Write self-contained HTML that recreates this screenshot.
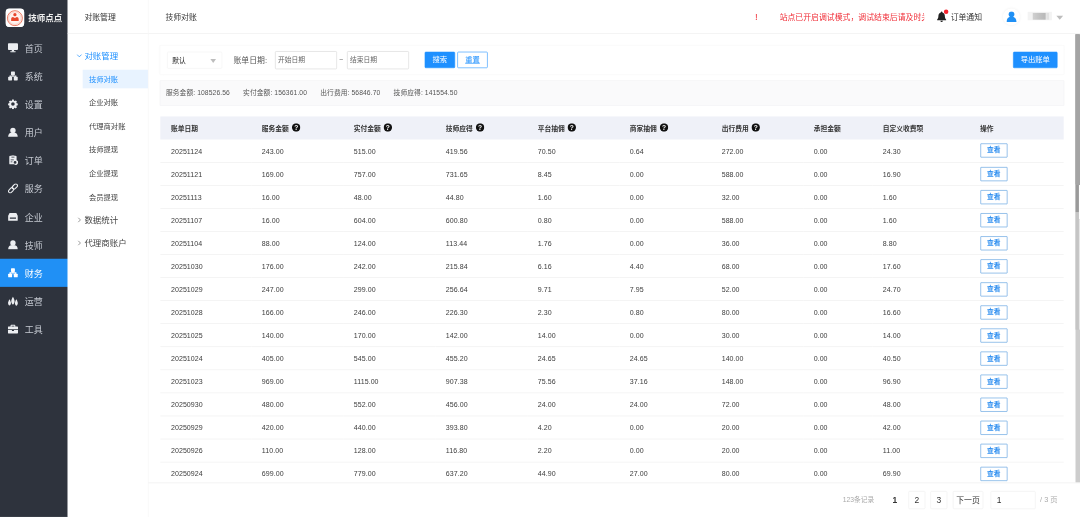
<!DOCTYPE html>
<html lang="zh-CN"><head><meta charset="utf-8"><title>技师对账</title>
<style>
*{box-sizing:border-box;margin:0;padding:0}
html,body{width:1080px;height:517px;overflow:hidden;background:#fff}
body{font-family:"Liberation Sans","Noto Sans CJK SC",sans-serif;color:#333}
#root{position:absolute;left:0;top:0;width:1920px;height:919px;transform:scale(0.5625);transform-origin:0 0;overflow:hidden;background:#fff;font-size:12px}
.side{position:absolute;left:0;top:0;width:120.500px;height:919px;background:#2e333d;color:#c5c9d1}
.logo{position:absolute;left:10px;top:14.500px;width:33px;height:33.500px;border-radius:7px;background:#fff;overflow:hidden}
.logo svg{width:34px;height:34px;display:block}
.brand{position:absolute;left:50px;top:0;height:60px;line-height:66px;font-size:15px;font-weight:700;color:#eee;letter-spacing:.2px;white-space:nowrap}
.menu{position:absolute;left:0;top:60px;width:120.500px}
.si{height:50px;position:relative}
.si.on{background:#2090f5;color:#fff}
.si.on .ic{color:#fff}
.si .ic{position:absolute;left:14px;top:16px;width:18px;height:18px;color:#eceef1}
.si .ic svg{width:18px;height:18px;display:block}
.si .tx{position:absolute;left:44px;top:2px;line-height:50px;font-size:16px;white-space:nowrap}
.sub{position:absolute;left:120px;top:0;width:144px;height:919px;border-right:1px solid #ececec;background:#fff}
.sub .ttl{height:60px;line-height:62px;padding-left:30px;font-size:14px;color:#333;border-bottom:1px solid #ececec}
.grp{position:absolute;left:0;width:143px;height:36px;line-height:36px;font-size:15px;color:#444}
.grp .tx{position:absolute;left:30px;white-space:nowrap}
.grp svg{position:absolute;left:16px;top:13px;width:10px;height:10px}
.grp.open{color:#1e90ff}
.it{position:absolute;left:27px;width:116px;height:33px;line-height:34px;font-size:13px;color:#444;padding-left:11px;white-space:nowrap}
.it.on{background:#e8f3ff;color:#1e90ff}
.hdr{position:absolute;left:264px;top:0;width:1656px;height:60px;border-bottom:1px solid #ececec;background:#fff}
.hdr .crumb{position:absolute;left:30px;top:0;line-height:62px;font-size:14px;color:#333}
.main{position:absolute;left:264px;top:61px;width:1648px;height:797px;overflow:hidden;background:#fff}
.filter{position:absolute;left:20px;top:19px;width:1608px;height:53px;background:#fff;border:1px solid #f8f8f8;box-shadow:0 1px 5px rgba(0,0,0,.045)}
.sel{position:absolute;left:12px;top:11px;width:98px;height:30px;border:1px solid #f0f0f0;border-radius:2px;font-size:12px;line-height:30px;padding-left:8px;color:#222}
.sel:after{content:"";position:absolute;right:10px;top:12px;border:5px solid transparent;border-top:7px solid #bdbdbd;border-bottom:0}
.lbl{position:absolute;left:130px;top:10.500px;line-height:30px;font-size:14px;color:#555;white-space:nowrap}
.inp{position:absolute;top:10px;height:32px;width:110px;border:1px solid #d4d4d4;border-radius:2px;font-size:12px;line-height:28px;padding-left:4px;color:#666;white-space:nowrap}
.dash{position:absolute;left:318px;top:10px;line-height:30px;font-size:12px;color:#666}
.btn{position:absolute;top:10.500px;height:29.500px;width:54px;border-radius:2px;font-size:13px;line-height:28px;text-align:center;border:1px solid #1e90ff;white-space:nowrap}
.btn.p{background:#1e90ff;color:#fff}
.btn.o{background:#fff;color:#1e90ff}
.sum{position:absolute;left:20px;top:82px;width:1608px;height:44.500px;background:#fafafb;border:1px solid #f3f3f4;line-height:43px;padding-left:10px;font-size:12px;color:#555;white-space:nowrap;letter-spacing:.15px}
.sum span{margin-right:23.500px}
table{position:absolute;left:21px;top:145.500px;width:1606px;border-collapse:collapse;table-layout:fixed;font-size:12.500px}
th{height:41px;background:transparent;text-align:left;padding:0 0 0 19px;font-size:12px;font-weight:700;color:#333;white-space:nowrap}
th span{vertical-align:middle;position:relative;top:-1px}
th .q{width:15px;height:15px;margin-left:5px;vertical-align:middle;position:relative;top:-1px}
td{height:41px;border-bottom:1px solid #ececec;padding:2px 0 0 19px;letter-spacing:.1px;color:#3c3c3c;white-space:nowrap}
.vb{display:inline-block;margin-left:1px;position:relative;top:-1px;width:47.500px;height:25px;line-height:23px;border:1px solid #4a94dc;color:#2f8ff0;font-size:12px;font-weight:700;text-align:center;border-radius:1px;vertical-align:middle;background:#fff}
.foot{position:absolute;left:264px;top:858px;width:1656px;height:61px;border-top:1px solid #e9e9e9;background:#fff}
.foot div{position:absolute;white-space:nowrap}
.pg{top:14px;height:32px;line-height:30px;width:30px;text-align:center;font-size:15px;color:#333;border:1px solid #eee;border-radius:2px}
.sb{position:absolute;left:1911.500px;top:60.500px;width:9px;height:797.500px;background:#cdcdcd}
</style></head><body>
<div id="root">
<div class="side">
<div class="logo"><svg viewBox="0 0 34 34"><rect width="34" height="34" fill="#fff"/><circle cx="16.500" cy="17.300" r="13.300" fill="#fff" stroke="#ea6044" stroke-width="1.500"/><circle cx="16.500" cy="17.300" r="11.200" fill="#fff3ef" stroke="#f4b3a3" stroke-width="1"/><circle cx="16.500" cy="11.200" r="2.900" fill="#e8472d"/><path d="M9.800 22.500v-3.500c0-2.300 1.500-3.800 3.300-3.800l3.400 2 3.400-2c1.800 0 3.300 1.500 3.300 3.800v3.500z" fill="#e8472d"/></svg></div>
<div class="brand">技师点点</div>
<div class="menu">
<div class="si"><span class="ic"><svg viewBox="0 0 18 18"><rect x="0" y="1" width="18" height="12" rx="1.800" fill="currentColor"/><rect x="7" y="12.500" width="4" height="3" fill="currentColor"/><rect x="4" y="15" width="10" height="2" rx=".8" fill="currentColor"/></svg></span><span class="tx">首页</span></div>
<div class="si"><span class="ic"><svg viewBox="0 0 18 18"><rect x="5.500" y="1" width="7" height="6.500" rx="1.200" fill="currentColor"/><rect x="0.500" y="10.500" width="7" height="6.500" rx="1.200" fill="currentColor"/><rect x="10.500" y="10.500" width="7" height="6.500" rx="1.200" fill="currentColor"/><path d="M9 7v3M4 11.500V9.200h10v2.300" stroke="currentColor" stroke-width="2.200" fill="none"/></svg></span><span class="tx">系统</span></div>
<div class="si"><span class="ic"><svg viewBox="-1 -1 18 18"><path fill="currentColor" fill-rule="evenodd" d="M6.500 0h3l.4 2 1.400.6 1.700-1.100 2.100 2.100-1.100 1.700.6 1.400 2 .4v3l-2 .4-.6 1.400 1.100 1.700-2.100 2.100-1.700-1.100-1.400.6-.4 2h-3l-.4-2-1.400-.6-1.700 1.100-2.100-2.100 1.100-1.700-.6-1.400-2-.4v-3l2-.4.6-1.400-1.100-1.700 2.100-2.100 1.700 1.100 1.400-.6zM8 4.800a3.200 3.200 0 100 6.400 3.200 3.200 0 000-6.400z"/></svg></span><span class="tx">设置</span></div>
<div class="si"><span class="ic"><svg viewBox="0 0 18 18"><circle cx="9" cy="5.800" r="4.800" fill="currentColor"/><path d="M0.500 17c0-4.800 2.500-7.500 8.500-7.500s8.500 2.700 8.500 7.500z" fill="currentColor"/></svg></span><span class="tx">用户</span></div>
<div class="si"><span class="ic"><svg viewBox="0 0 18 18"><path fill="currentColor" fill-rule="evenodd" d="M2.500 2.500a1.500 1.500 0 011.500-1.500h2l.8-1h4.400l.8 1h2a1.500 1.500 0 011.500 1.500v6.300a4.300 4.300 0 11-4.500 7.200H4a1.500 1.500 0 01-1.500-1.500zM6.300 2.600v1.600h5.400V2.600zM5 7.500v1.600h5.500V7.500zM5 11v1.600h3V11zM12.800 10.300a2.500 2.500 0 100 5 2.500 2.500 0 000-5z"/></svg></span><span class="tx">订单</span></div>
<div class="si"><span class="ic"><svg viewBox="0 0 18 18"><g transform="rotate(-45 9 9)" fill="none" stroke="currentColor" stroke-width="1.900"><rect x="-1" y="6" width="10.500" height="6" rx="3"/><rect x="8.500" y="6" width="10.500" height="6" rx="3"/></g></svg></span><span class="tx">服务</span></div>
<div class="si"><span class="ic"><svg viewBox="0 0 18 18"><path fill="currentColor" fill-rule="evenodd" d="M3 2.500h12l2.500 5v8a1 1 0 01-1 1h-15a1 1 0 01-1-1v-8zM3.500 10.500v2.300h11v-2.300z"/></svg></span><span class="tx">企业</span></div>
<div class="si"><span class="ic"><svg viewBox="0 0 18 18"><circle cx="9" cy="5.800" r="4.800" fill="currentColor"/><path d="M0.500 17c0-4.800 2.500-7.500 8.500-7.500s8.500 2.700 8.500 7.500z" fill="currentColor"/></svg></span><span class="tx">技师</span></div>
<div class="si on"><span class="ic"><svg viewBox="0 0 18 18"><rect x="5.500" y="1" width="7" height="6.500" rx="1.200" fill="currentColor"/><rect x="0.500" y="10.500" width="7" height="6.500" rx="1.200" fill="currentColor"/><rect x="10.500" y="10.500" width="7" height="6.500" rx="1.200" fill="currentColor"/><path d="M9 7v3M4 11.500V9.200h10v2.300" stroke="currentColor" stroke-width="2.200" fill="none"/></svg></span><span class="tx">财务</span></div>
<div class="si"><span class="ic"><svg viewBox="0 0 18 18"><path fill="currentColor" d="M2.9 6C4.46 8.5 5.5 11.5 5.5 12.5C5.5 14.5 4.2 17 2.9 17C1.5999999999999999 17 0.2999999999999998 14.5 0.2999999999999998 12.5C0.2999999999999998 11.5 1.3399999999999999 8.5 2.9 6zM9 1.5C10.8 4.0 12 8.5 12 9.5C12 11.5 10.5 15.5 9 15.5C7.5 15.5 6 11.5 6 9.5C6 8.5 7.2 4.0 9 1.5zM15.1 6C16.66 8.5 17.7 11.75 17.7 12.75C17.7 14.75 16.4 17.5 15.1 17.5C13.799999999999999 17.5 12.5 14.75 12.5 12.75C12.5 11.75 13.54 8.5 15.1 6z"/></svg></span><span class="tx">运营</span></div>
<div class="si"><span class="ic"><svg viewBox="0 0 18 18"><path fill="currentColor" fill-rule="evenodd" d="M6 1.500h6a1.200 1.200 0 011.200 1.200V4.500h3.600a1.200 1.200 0 011.200 1.200v3.600H0V5.700a1.200 1.200 0 011.200-1.200h3.600V2.700A1.200 1.200 0 016 1.500zM6.500 3.200v1.300h5V3.200zM0 10.500h7.200v1.800h3.600v-1.800H18v5a1.200 1.200 0 01-1.200 1.200H1.200A1.200 1.200 0 010 15.500z"/></svg></span><span class="tx">工具</span></div>
</div>
</div>
<div class="sub">
<div class="ttl">对账管理</div>
<div class="grp open" style="top:81px"><svg viewBox="0 0 10 10"><path d="M1 3l4 4 4-4" fill="none" stroke="#1e90ff" stroke-width="1.300"/></svg><span class="tx">对账管理</span></div>
<div class="it on" style="top:124px">技师对账</div>
<div class="it" style="top:166px">企业对账</div>
<div class="it" style="top:208px">代理商对账</div>
<div class="it" style="top:250px">技师提现</div>
<div class="it" style="top:292px">企业提现</div>
<div class="it" style="top:334px">会员提现</div>
<div class="grp" style="top:373px"><svg viewBox="0 0 10 10"><path d="M3 1l4 4-4 4" fill="none" stroke="#777" stroke-width="1.300"/></svg><span class="tx">数据统计</span></div>
<div class="grp" style="top:414px"><svg viewBox="0 0 10 10"><path d="M3 1l4 4-4 4" fill="none" stroke="#777" stroke-width="1.300"/></svg><span class="tx">代理商账户</span></div>
</div>
<div class="hdr">
<div class="crumb">技师对账</div>
<div style="position:absolute;left:1078px;top:0;line-height:60px;font-size:17px;color:#f02b35">!</div>
<div style="position:absolute;left:1122px;top:0;width:257px;overflow:hidden;line-height:60px;font-size:14px;color:#f02b35;white-space:nowrap">站点已开启调试模式，调试结束后请及时关闭</div>
<svg style="position:absolute;left:1400px;top:19px;width:20px;height:22px" viewBox="0 0 20 22"><path fill="#222" d="M10 1.500a1.400 1.400 0 011.400 1.400v.5c2.700.7 4.300 3 4.300 5.800 0 4.200 1.200 5.600 2.300 6.600v1H2v-1c1.100-1 2.300-2.400 2.300-6.600 0-2.800 1.600-5.100 4.300-5.800v-.5A1.400 1.400 0 0110 1.500zM7.800 18h4.400a2.200 2.200 0 01-4.400 0z"/></svg>
<div style="position:absolute;left:1414px;top:17px;width:8px;height:8px;border-radius:50%;background:#f5222d"></div>
<div style="position:absolute;left:1426px;top:0;line-height:60px;font-size:14px;color:#333;white-space:nowrap">订单通知</div>
<div style="position:absolute;left:1519px;top:15px;width:30px;height:30px;border-radius:50%;background:#fff;box-shadow:0 0 5px rgba(0,0,0,.07)"></div>
<svg style="position:absolute;left:1525px;top:20px;width:18.500px;height:19.500px" viewBox="0 0 16 17"><circle cx="8" cy="4.800" r="4.400" fill="#2090f5"/><path d="M0.300 16.500c0-5 2.700-8 7.700-8s7.700 3 7.700 8z" fill="#2090f5"/></svg>
<div style="position:absolute;left:1563px;top:21px;width:43px;height:15px;background:#f3f3f3;filter:blur(1px)"></div><div style="position:absolute;left:1572px;top:23px;width:23px;height:12px;background:linear-gradient(90deg,#d0d0d0,#c2c2c2 50%,#b8b8b8);filter:blur(.8px)"></div><div style="position:absolute;left:1596px;top:23px;width:5px;height:12px;background:#e2e2e2;filter:blur(.8px)"></div>
<div style="position:absolute;left:1613.500px;top:28px;border:6px solid transparent;border-top:7.500px solid #bdbdbd;border-bottom:0"></div>
</div>
<div class="main">
<div class="filter">
<div class="sel">默认</div>
<div class="lbl">账单日期:</div>
<div class="inp" style="left:204px">开始日期</div>
<div class="dash">~</div>
<div class="inp" style="left:332px">结束日期</div>
<div class="btn p" style="left:470px">搜索</div>
<div class="btn o" style="left:528px"><span style="text-decoration:underline">重置</span></div>
<div class="btn p" style="left:1516px;width:79px">导出账单</div>
</div>
<div class="sum"><span>服务金额: 108526.56</span><span>实付金额: 156361.00</span><span>出行费用: 56846.70</span><span>技师应得: 141554.50</span></div>
<div style="position:absolute;left:21px;top:145.500px;width:1606px;height:41px;background:#eff1f8"></div>
<table><colgroup><col style="width:161.500px"><col style="width:163.500px"><col style="width:163.500px"><col style="width:163.500px"><col style="width:163.500px"><col style="width:163.500px"><col style="width:163.500px"><col style="width:123px"><col style="width:172.500px"><col></colgroup>
<thead><tr><th><span>账单日期</span></th><th><span>服务金额</span><svg class="q" viewBox="0 0 14 14"><circle cx="7" cy="7" r="7" fill="#111"/><text x="7" y="11" text-anchor="middle" font-size="11" font-weight="700" fill="#fff" font-family="Liberation Sans, sans-serif">?</text></svg></th><th><span>实付金额</span><svg class="q" viewBox="0 0 14 14"><circle cx="7" cy="7" r="7" fill="#111"/><text x="7" y="11" text-anchor="middle" font-size="11" font-weight="700" fill="#fff" font-family="Liberation Sans, sans-serif">?</text></svg></th><th><span>技师应得</span><svg class="q" viewBox="0 0 14 14"><circle cx="7" cy="7" r="7" fill="#111"/><text x="7" y="11" text-anchor="middle" font-size="11" font-weight="700" fill="#fff" font-family="Liberation Sans, sans-serif">?</text></svg></th><th><span>平台抽佣</span><svg class="q" viewBox="0 0 14 14"><circle cx="7" cy="7" r="7" fill="#111"/><text x="7" y="11" text-anchor="middle" font-size="11" font-weight="700" fill="#fff" font-family="Liberation Sans, sans-serif">?</text></svg></th><th><span>商家抽佣</span><svg class="q" viewBox="0 0 14 14"><circle cx="7" cy="7" r="7" fill="#111"/><text x="7" y="11" text-anchor="middle" font-size="11" font-weight="700" fill="#fff" font-family="Liberation Sans, sans-serif">?</text></svg></th><th><span>出行费用</span><svg class="q" viewBox="0 0 14 14"><circle cx="7" cy="7" r="7" fill="#111"/><text x="7" y="11" text-anchor="middle" font-size="11" font-weight="700" fill="#fff" font-family="Liberation Sans, sans-serif">?</text></svg></th><th><span>承担金额</span></th><th><span>自定义收费项</span></th><th><span>操作</span></th></tr></thead>
<tbody>
<tr><td>20251124</td><td>243.00</td><td>515.00</td><td>419.56</td><td>70.50</td><td>0.64</td><td>272.00</td><td>0.00</td><td>24.30</td><td><span class="vb">查看</span></td></tr>
<tr><td>20251121</td><td>169.00</td><td>757.00</td><td>731.65</td><td>8.45</td><td>0.00</td><td>588.00</td><td>0.00</td><td>16.90</td><td><span class="vb">查看</span></td></tr>
<tr><td>20251113</td><td>16.00</td><td>48.00</td><td>44.80</td><td>1.60</td><td>0.00</td><td>32.00</td><td>0.00</td><td>1.60</td><td><span class="vb">查看</span></td></tr>
<tr><td>20251107</td><td>16.00</td><td>604.00</td><td>600.80</td><td>0.80</td><td>0.00</td><td>588.00</td><td>0.00</td><td>1.60</td><td><span class="vb">查看</span></td></tr>
<tr><td>20251104</td><td>88.00</td><td>124.00</td><td>113.44</td><td>1.76</td><td>0.00</td><td>36.00</td><td>0.00</td><td>8.80</td><td><span class="vb">查看</span></td></tr>
<tr><td>20251030</td><td>176.00</td><td>242.00</td><td>215.84</td><td>6.16</td><td>4.40</td><td>68.00</td><td>0.00</td><td>17.60</td><td><span class="vb">查看</span></td></tr>
<tr><td>20251029</td><td>247.00</td><td>299.00</td><td>256.64</td><td>9.71</td><td>7.95</td><td>52.00</td><td>0.00</td><td>24.70</td><td><span class="vb">查看</span></td></tr>
<tr><td>20251028</td><td>166.00</td><td>246.00</td><td>226.30</td><td>2.30</td><td>0.80</td><td>80.00</td><td>0.00</td><td>16.60</td><td><span class="vb">查看</span></td></tr>
<tr><td>20251025</td><td>140.00</td><td>170.00</td><td>142.00</td><td>14.00</td><td>0.00</td><td>30.00</td><td>0.00</td><td>14.00</td><td><span class="vb">查看</span></td></tr>
<tr><td>20251024</td><td>405.00</td><td>545.00</td><td>455.20</td><td>24.65</td><td>24.65</td><td>140.00</td><td>0.00</td><td>40.50</td><td><span class="vb">查看</span></td></tr>
<tr><td>20251023</td><td>969.00</td><td>1115.00</td><td>907.38</td><td>75.56</td><td>37.16</td><td>148.00</td><td>0.00</td><td>96.90</td><td><span class="vb">查看</span></td></tr>
<tr><td>20250930</td><td>480.00</td><td>552.00</td><td>456.00</td><td>24.00</td><td>24.00</td><td>72.00</td><td>0.00</td><td>48.00</td><td><span class="vb">查看</span></td></tr>
<tr><td>20250929</td><td>420.00</td><td>440.00</td><td>393.80</td><td>4.20</td><td>0.00</td><td>20.00</td><td>0.00</td><td>42.00</td><td><span class="vb">查看</span></td></tr>
<tr><td>20250926</td><td>110.00</td><td>128.00</td><td>116.80</td><td>2.20</td><td>0.00</td><td>20.00</td><td>0.00</td><td>11.00</td><td><span class="vb">查看</span></td></tr>
<tr><td>20250924</td><td>699.00</td><td>779.00</td><td>637.20</td><td>44.90</td><td>27.00</td><td>80.00</td><td>0.00</td><td>69.90</td><td><span class="vb">查看</span></td></tr>
</tbody></table>
</div>
<div class="sb"><div style="position:absolute;left:6px;top:268px;width:3px;height:61px;background:#fff"></div><div style="position:absolute;left:6px;top:329px;width:3px;height:196px;background:#e6e6e6;border-radius:0 0 2px 2px"></div><div style="position:absolute;left:0;top:316px;width:6px;height:209px;background:#c5c5c5"></div><div style="position:absolute;left:0;top:0;width:6px;height:316px;background:#9a9a9a"></div><div style="position:absolute;left:0;top:0;width:9px;height:268px;background:#a4a4a4;border-radius:0 0 0 3px"></div></div>
<div class="foot">
<div style="left:1234px;top:14px;line-height:32px;font-size:12px;color:#aaa">123条记录</div>
<div class="pg" style="left:1312px;border-color:transparent;font-weight:700">1</div>
<div class="pg" style="left:1351px">2</div>
<div class="pg" style="left:1390px">3</div>
<div class="pg" style="left:1430px;width:54px;font-size:14px">下一页</div>
<div class="pg" style="left:1497px;width:80px;text-align:left;padding-left:10px">1</div>
<div style="left:1585px;top:14px;line-height:32px;font-size:13px;color:#aaa">/ 3 页</div>
</div>
</div>
</body></html>
